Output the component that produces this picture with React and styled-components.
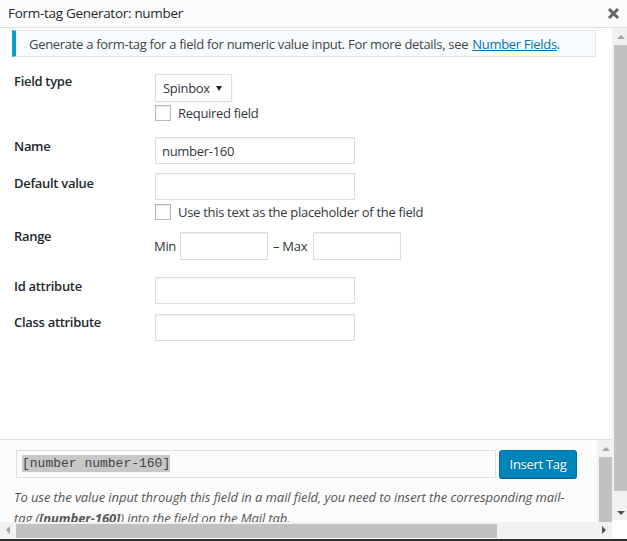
import React from 'react';
import styled, { createGlobalStyle } from 'styled-components';

const GlobalStyle = createGlobalStyle`
  html, body {
    margin: 0;
    padding: 0;
    background: #fff;
  }
  body {
    font-family: "Open Sans", "Noto Sans", sans-serif;
    font-size: 13px;
    letter-spacing: -0.3px;
    color: #32373c;
  }
`;

const Window = styled.div`
  width: 627px;
  height: 541px;
  display: flex;
  flex-direction: column;
  overflow: hidden;
  background: #fff;
`;

const TitleBar = styled.div`
  height: 27px;
  flex: none;
  display: flex;
  align-items: center;
  justify-content: space-between;
  padding: 0 7px 0 8px;
  background: #fcfcfc;
  border-bottom: 1px solid #ddd;
`;

const Title = styled.div`
  font-size: 13.5px;
  font-weight: 400;
  color: #23282d;
  line-height: 27px;
`;

const CloseBtn = styled.button`
  width: 14px;
  height: 14px;
  padding: 0;
  border: 0;
  background: none;
  display: flex;
  align-items: center;
  justify-content: center;
  cursor: pointer;
`;

const Body = styled.div`
  height: 511px;
  flex: none;
  display: flex;
`;

const LeftCol = styled.div`
  width: 612px;
  display: flex;
  flex-direction: column;
`;

const RightCol = styled.div`
  width: 15px;
  display: flex;
  flex-direction: column;
`;

const Content = styled.div`
  height: 411px;
  flex: none;
  padding: 2px 16px 0 12px;
  box-sizing: border-box;
  background: #fff;
`;

const Notice = styled.div`
  height: 27px;
  box-sizing: border-box;
  display: flex;
  align-items: center;
  padding-left: 13px;
  background: #f7fcfe;
  border: 1px solid #e5e5e5;
  border-left: 4px solid #00a0d2;
  color: #444;
  white-space: nowrap;

  a {
    color: #0073aa;
    text-decoration: underline;
    margin-left: 4px;
  }
`;

const Form = styled.div`
  padding-left: 2px;
  display: flex;
  flex-direction: column;
`;

const Row = styled.div`
  display: grid;
  grid-template-columns: 141px 1fr;
  margin-top: ${p => p.$mt}px;
`;

const Label = styled.div`
  font-weight: 600;
  color: #23282d;
  line-height: 18px;
  padding-top: ${p => p.$pt || 0}px;
`;

const Field = styled.div`
  display: flex;
  flex-direction: column;
  align-items: flex-start;
  padding-top: ${p => p.$pt || 0}px;
`;

const Select = styled.div`
  width: 77px;
  height: 28px;
  box-sizing: border-box;
  border: 1px solid #ddd;
  box-shadow: 0 1px 2px rgba(0, 0, 0, 0.07);
  background: #fff;
  display: flex;
  align-items: center;
  justify-content: space-between;
  padding: 0 9px 0 7px;
  color: #32373c;
`;

const Caret = styled.span`
  width: 0;
  height: 0;
  border-left: 3px solid transparent;
  border-right: 3px solid transparent;
  border-top: 5px solid #222;
`;

const TextInput = styled.div`
  width: ${p => p.$w || 200}px;
  height: ${p => p.$h || 27}px;
  box-sizing: border-box;
  border: 1px solid #ddd;
  box-shadow: inset 0 1px 2px rgba(0, 0, 0, 0.07);
  background: #fff;
  display: flex;
  align-items: center;
  padding: 0 6px;
  color: #32373c;
`;

const CheckLine = styled.label`
  display: flex;
  align-items: center;
  gap: 7px;
  height: 16px;
  margin-top: ${p => p.$mt}px;
  color: #32373c;
`;

const Checkbox = styled.span`
  width: 16px;
  height: 16px;
  box-sizing: border-box;
  border: 1px solid #b4b9be;
  background: #fff;
  box-shadow: inset 0 1px 2px rgba(0, 0, 0, 0.1);
`;

const RangeLine = styled.div`
  display: flex;
  align-items: center;
  gap: 4px;
  margin-left: -1px;
  color: #32373c;
`;

const RangeSep = styled.span`
  margin: 0 2px 0 1px;
`;

const BottomPanel = styled.div`
  height: 83px;
  flex: none;
  display: flex;
  box-sizing: border-box;
  border-top: 1px solid #ddd;
  background: #fcfcfc;
`;

const PanelInner = styled.div`
  width: 597px;
  padding: 9px 0 0 14px;
  box-sizing: border-box;
  overflow: hidden;
`;

const TagRow = styled.div`
  display: flex;
  align-items: center;
  gap: 3px;
  margin-left: 2px;
`;

const TagBox = styled.div`
  width: 480px;
  height: 28px;
  box-sizing: border-box;
  border: 1px solid #ddd;
  background: #fcfcfc;
  display: flex;
  align-items: center;
  padding: 0 5px;
  font-family: "Liberation Mono", "DejaVu Sans Mono", monospace;
  font-size: 13px;
  letter-spacing: 0;
`;

const Selected = styled.span`
  background: #c8c8c8;
  color: #46404a;
  line-height: 17px;
`;

const PrimaryButton = styled.button`
  width: 78px;
  height: 28px;
  padding: 0;
  margin-top: 1px;
  border: 1px solid #0073aa;
  border-radius: 3px;
  background: #0085ba;
  box-shadow: 0 1px 0 #006799;
  color: #fff;
  font-family: inherit;
  font-size: 13px;
  letter-spacing: -0.3px;
  text-shadow: 0 -1px 1px #006799;
  cursor: pointer;
`;

const Description = styled.p`
  margin: 9px 0 0;
  width: 560px;
  font-style: italic;
  line-height: 21px;
  letter-spacing: -0.08px;
  color: #555;

  strong {
    font-weight: 700;
  }
`;

const ScrollV = styled.div`
  width: 15px;
  height: ${p => p.$h}px;
  flex: none;
  display: flex;
  flex-direction: column;
  background: #f1f1f1;
`;

const ScrollH = styled.div`
  height: 16px;
  flex: none;
  display: flex;
  background: #f1f1f1;
`;

const ArrowBtn = styled.div`
  width: ${p => p.$w || 15}px;
  height: ${p => p.$h || 17}px;
  flex: none;
  display: flex;
  align-items: center;
  justify-content: center;
  padding-left: ${p => p.$pl || 0}px;
  box-sizing: border-box;
`;

const Arrow = styled.span`
  width: 0;
  height: 0;
  ${p => {
    const c = p.$dim ? '#a3a3a3' : '#505050';
    if (p.$dir === 'up') return `border-left: 4px solid transparent; border-right: 4px solid transparent; border-bottom: 4px solid ${c};`;
    if (p.$dir === 'down') return `border-left: 4px solid transparent; border-right: 4px solid transparent; border-top: 4px solid ${c};`;
    if (p.$dir === 'left') return `border-top: 4px solid transparent; border-bottom: 4px solid transparent; border-right: 4px solid ${c};`;
    return `border-top: 4px solid transparent; border-bottom: 4px solid transparent; border-left: 4px solid ${c};`;
  }}
`;

const ThumbV = styled.div`
  height: ${p => (p.$h ? `${p.$h}px` : 'auto')};
  flex: ${p => (p.$h ? 'none' : '1')};
  margin-left: 2px;
  background: #c1c1c1;
`;

const ThumbH = styled.div`
  width: ${p => p.$w}px;
  flex: none;
  margin: 2px 0 0;
  background: #c1c1c1;
`;

const Spacer = styled.div`
  flex: 1;
`;

const Corner = styled.div`
  flex: 1;
  background: #fff;
`;

const BottomEdge = styled.div`
  height: 2px;
  flex: none;
  background: #2d2d2d;
`;

const Gap = styled.div`
  height: 1px;
  flex: none;
  background: #fff;
`;

function CloseIcon() {
  return (
    <svg width="13" height="13" viewBox="0 0 13 13">
      <path d="M2 2 L11 11 M11 2 L2 11" stroke="#666" strokeWidth="3" strokeLinecap="butt" />
    </svg>
  );
}

const rows = [
  { label: 'Name', mt: 16, value: 'number-160' },
];

export default function App() {
  return (
    <>
      <GlobalStyle />
      <Window>
        <TitleBar>
          <Title>Form-tag Generator: number</Title>
          <CloseBtn aria-label="Close">
            <CloseIcon />
          </CloseBtn>
        </TitleBar>

        <Body>
          <LeftCol>
            <Content>
              <Notice>
                Generate a form-tag for a field for numeric value input. For more details, see
                <a href="#number-fields">Number Fields</a>.
              </Notice>

              <Form>
                <Row $mt={15}>
                  <Label>Field type</Label>
                  <Field $pt={2}>
                    <Select>
                      Spinbox
                      <Caret />
                    </Select>
                    <CheckLine $mt={3}>
                      <Checkbox />
                      Required field
                    </CheckLine>
                  </Field>
                </Row>

                {rows.map(r => (
                  <Row key={r.label} $mt={r.mt}>
                    <Label>{r.label}</Label>
                    <Field>
                      <TextInput>{r.value}</TextInput>
                    </Field>
                  </Row>
                ))}

                <Row $mt={9}>
                  <Label $pt={1}>Default value</Label>
                  <Field>
                    <TextInput />
                    <CheckLine $mt={4}>
                      <Checkbox />
                      Use this text as the placeholder of the field
                    </CheckLine>
                  </Field>
                </Row>

                <Row $mt={7}>
                  <Label>Range</Label>
                  <Field $pt={5}>
                    <RangeLine>
                      Min
                      <TextInput $w={88} $h={28} />
                      <RangeSep>&ndash; Max</RangeSep>
                      <TextInput $w={88} $h={28} />
                    </RangeLine>
                  </Field>
                </Row>

                <Row $mt={17}>
                  <Label>Id attribute</Label>
                  <Field>
                    <TextInput />
                  </Field>
                </Row>

                <Row $mt={9}>
                  <Label>Class attribute</Label>
                  <Field $pt={1}>
                    <TextInput />
                  </Field>
                </Row>
              </Form>
            </Content>

            <BottomPanel>
              <PanelInner>
                <TagRow>
                  <TagBox>
                    <Selected>[number number-160]</Selected>
                  </TagBox>
                  <PrimaryButton>Insert Tag</PrimaryButton>
                </TagRow>
                <Description>
                  To use the value input through this field in a mail field, you need to insert the
                  corresponding mail-tag (<strong>[number-160]</strong>) into the field on the Mail tab.
                </Description>
              </PanelInner>
              <ScrollV $h={82}>
                <ArrowBtn $h={17} $pl={2}>
                  <Arrow $dir="up" $dim />
                </ArrowBtn>
                <ThumbV />
              </ScrollV>
            </BottomPanel>

            <ScrollH>
              <ArrowBtn $w={16} $h={16}>
                <Arrow $dir="left" $dim />
              </ArrowBtn>
              <ThumbH $w={481} />
              <Spacer />
              <ArrowBtn $w={17} $h={16}>
                <Arrow $dir="right" />
              </ArrowBtn>
            </ScrollH>
            <Gap />
          </LeftCol>

          <RightCol>
            <ScrollV $h={492}>
              <ArrowBtn $h={17} $pl={2}>
                <Arrow $dir="up" $dim />
              </ArrowBtn>
              <ThumbV $h={446} />
              <Spacer />
              <ArrowBtn $h={15} $pl={2}>
                <Arrow $dir="down" />
              </ArrowBtn>
            </ScrollV>
            <Corner />
          </RightCol>
        </Body>
        <BottomEdge />
      </Window>
    </>
  );
}
